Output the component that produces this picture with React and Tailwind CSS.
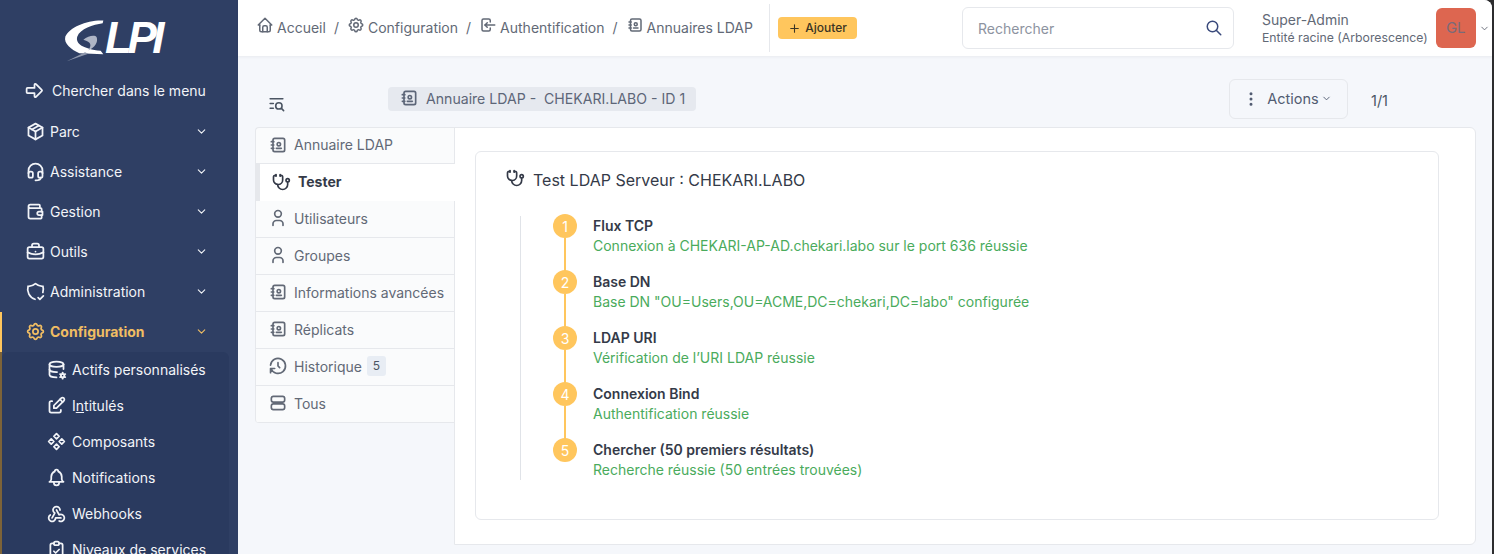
import {
  TbAddressBook,
  TbArrowBigRight,
  TbBell,
  TbBriefcase,
  TbChevronDown,
  TbClipboardCheck,
  TbComponents,
  TbDatabaseCog,
  TbDotsVertical,
  TbEdit,
  TbHeadset,
  TbHistory,
  TbHome,
  TbListSearch,
  TbLogin,
  TbPackage,
  TbPlus,
  TbSearch,
  TbSettings,
  TbShieldCheck,
  TbStethoscope,
  TbUser,
  TbWallet,
  TbWebhook,
} from "react-icons/tb";

const MENU = [
  { label: "Parc", icon: TbPackage },
  { label: "Assistance", icon: TbHeadset },
  { label: "Gestion", icon: TbWallet },
  { label: "Outils", icon: TbBriefcase },
  { label: "Administration", icon: TbShieldCheck },
];

const SUBMENU = [
  { label: "Actifs personnalisés", icon: TbDatabaseCog },
  { label: <><span>I</span><span className="underline">n</span><span>titulés</span></>, icon: TbEdit },
  { label: "Composants", icon: TbComponents },
  { label: "Notifications", icon: TbBell },
  { label: "Webhooks", icon: TbWebhook },
  { label: "Niveaux de services", icon: TbClipboardCheck },
];

const CRUMBS = [
  { label: "Accueil", icon: TbHome },
  { label: "Configuration", icon: TbSettings },
  { label: "Authentification", icon: TbLogin },
  { label: "Annuaires LDAP", icon: TbAddressBook },
];

function TwoRows({ size = 18, className }) {
  return (
    <svg width={size} height={size} viewBox="0 0 24 24" fill="none" stroke="currentColor" strokeWidth="2" strokeLinecap="round" strokeLinejoin="round" className={className}>
      <rect x="4" y="4" width="16" height="7" rx="2.5" />
      <rect x="4" y="13" width="16" height="7" rx="2.5" />
    </svg>
  );
}

const TABS = [
  { label: "Annuaire LDAP", icon: TbAddressBook },
  { label: "Tester", icon: TbStethoscope, active: true },
  { label: "Utilisateurs", icon: TbUser },
  { label: "Groupes", icon: TbUser },
  { label: "Informations avancées", icon: TbAddressBook },
  { label: "Réplicats", icon: TbAddressBook },
  { label: "Historique", icon: TbHistory, badge: 5 },
  { label: "Tous", icon: TwoRows },
];

const STEPS = [
  { title: "Flux TCP", text: "Connexion à CHEKARI-AP-AD.chekari.labo sur le port 636 réussie" },
  { title: "Base DN", text: 'Base DN "OU=Users,OU=ACME,DC=chekari,DC=labo" configurée' },
  { title: "LDAP URI", text: "Vérification de l’URI LDAP réussie" },
  { title: "Connexion Bind", text: "Authentification réussie" },
  { title: "Chercher (50 premiers résultats)", text: "Recherche réussie (50 entrées trouvées)" },
];

function Logo() {
  return (
    <div className="flex h-[71px] shrink-0 items-start pl-[60px] pt-[17px]">
      <svg width="45" height="47" viewBox="30 20 135 140" className="shrink-0">
        <path d="M160 30 C110 28 60 50 46 78 C40 100 65 118 88 128 L160 131 L152 121 C100 115 75 100 82 78 C90 55 130 42 158 38 Z" fill="#ffffff" />
        <path d="M100 88 C115 75 135 72 140 80 C145 95 135 110 115 120 C125 105 125 95 100 88 Z" fill="#aeb5c5" />
        <path d="M50 152 L105 125 L115 130 Z" fill="#8f98ad" />
      </svg>
      <span className="mt-[-1px] text-[44px] leading-[44px] font-bold italic tracking-[-4.5px] text-white font-['Liberation_Sans',sans-serif]">
        LPI
      </span>
    </div>
  );
}

function Sidebar() {
  return (
    <aside className="flex h-full w-[238px] shrink-0 flex-col overflow-hidden bg-[#2f3f64] text-[14px] text-[#f2f4f8]">
      <Logo />
      <div className="flex h-[41px] shrink-0 items-center pb-[2px] pl-[24px]">
        <TbArrowBigRight size={21} className="mr-[7px]" />
        <span>Chercher dans le menu</span>
      </div>
      <nav className="shrink-0">
        {MENU.map((m) => (
          <div key={m.label} className="flex h-[40px] items-center pb-[2px] pl-[25px] pr-[30px]">
            <m.icon size={21} className="mr-[4px] shrink-0" />
            <span className="flex-1">{m.label}</span>
            <TbChevronDown size={13} strokeWidth={2} />
          </div>
        ))}
        <div className="flex h-[40px] items-center border-l-2 border-[#ffc65d] pb-[2px] pl-[23px] pr-[30px] font-bold text-[#f0bd63]">
          <TbSettings size={21} className="mr-[4px] shrink-0" />
          <span className="flex-1">Configuration</span>
          <TbChevronDown size={13} strokeWidth={2} />
        </div>
      </nav>
      <div className="flex flex-1">
        <div className="w-[2px] bg-[#7d6338]" />
        <ul className="w-[227px] rounded-[6px] bg-[#2a3a5f]">
          {SUBMENU.map((s, i) => (
            <li key={i} className="flex h-[36px] items-center pb-[2px] pl-[44px] whitespace-nowrap">
              <s.icon size={21} className="mr-[5px] shrink-0" />
              <span>{s.label}</span>
            </li>
          ))}
        </ul>
      </div>
    </aside>
  );
}

function Header() {
  return (
    <header className="flex h-[56px] shrink-0 items-center rounded-tr-[8px] bg-white shadow-[0_1px_3px_rgba(30,41,59,0.06)]">
      <ol className="flex h-[48px] w-[532px] shrink-0 items-center border-r border-[#e6e8ec] pb-[2px] pl-[18px] text-[14px] text-[#626976]">
        {CRUMBS.map((c, i) => (
          <li key={c.label} className="flex items-center whitespace-nowrap">
            {i > 0 && <span className="mx-[8px]">/</span>}
            <c.icon size={18} className="mr-[3px] mt-[-4px]" />
            <span>{c.label}</span>
          </li>
        ))}
      </ol>
      <button className="ml-[8px] flex h-[22px] w-[79px] items-center justify-center rounded-[4px] bg-[#ffc65d] text-[12px] font-medium text-[#3b3524]">
        <TbPlus size={13} className="mr-[4px]" />
        Ajouter
      </button>
      <div className="ml-[105px] flex h-[42px] w-[272px] shrink-0 items-center rounded-[6px] border border-[#e6e8ec] pl-[15px] pr-[10px]">
        <span className="flex-1 text-[14px] text-[#8d93a0]">Rechercher</span>
        <TbSearch size={18} className="text-[#3a4a7c]" />
      </div>
      <div className="ml-[28px] flex flex-col whitespace-nowrap text-[#626976]">
        <span className="text-[14px] leading-[18px]">Super-Admin</span>
        <span className="text-[12.25px] leading-[17px]">Entité racine (Arborescence)</span>
      </div>
      <div className="ml-[8px] flex h-[40px] w-[40px] shrink-0 items-center justify-center rounded-[6px] bg-[#dd6650] text-[15px] text-[#7a6a78]">
        GL
      </div>
      <TbChevronDown size={11} className="ml-[3px] shrink-0 text-[#626976]" />
    </header>
  );
}

function TitleRow() {
  return (
    <div className="flex h-[71px] shrink-0 items-start">
      <TbListSearch size={19} className="ml-[29px] mt-[38px] text-[#4b5563]" />
      <div className="ml-[102px] mt-[31px] flex h-[24px] w-[308px] items-center rounded-[4px] bg-[#e6e9ef] pl-[11px] text-[14.1px] text-[#5d6678] whitespace-pre">
        <TbAddressBook size={20} className="mr-[7px] mt-[-3px]" />
        Annuaire LDAP -  CHEKARI.LABO - ID 1
      </div>
      <button className="ml-[533px] mt-[23px] flex h-[40px] w-[119px] items-center justify-center rounded-[6px] border border-[#e6e8ec] pb-[1px] text-[14.5px] text-[#525c72]">
        <TbDotsVertical size={18} className="mr-[7px] ml-[-3px]" />
        Actions
        <TbChevronDown size={11} className="ml-[2px]" />
      </button>
      <span className="ml-[23px] mt-[34px] text-[14.5px] text-[#4b5563]">1/1</span>
    </div>
  );
}

function Tabs() {
  return (
    <ul className="relative z-10 mr-[-1px] w-[200px] shrink-0 self-start overflow-hidden rounded-l-[4px] border border-r-0 border-b-0 border-[#e6e8ec] bg-[#fafbfc] text-[14px] text-[#626976]">
      {TABS.map((t, i) => (
        <li
          key={t.label}
          className={
            t.active
              ? "flex h-[37px] items-center border-l-[4px] border-[#e6e8ec] bg-white pb-[2px] pl-[11px] font-bold text-[#343a48]"
              : "flex items-center border-r border-b border-[#e6e8ec] pb-[2px] pl-[12px] " + (i === 0 ? "h-[36px]" : "h-[37px]")
          }
        >
          <t.icon size={20} className={t.active ? "mr-[7px] shrink-0" : "mr-[6px] shrink-0"} />
          <span className="whitespace-nowrap">{t.label}</span>
          {t.badge && (
            <span className="ml-[5px] flex h-[20px] w-[19px] items-center justify-center rounded-[3px] bg-[#e8edf4] text-[12px] text-[#4b5563]">{t.badge}</span>
          )}
        </li>
      ))}
    </ul>
  );
}

function Step({ step, n, last }) {
  return (
    <li className="flex h-[56px]">
      <div className="mt-[-2px] flex w-[24px] shrink-0 flex-col items-center">
        <span className="flex h-[24px] w-[24px] shrink-0 items-center justify-center rounded-full bg-[#ffc65d] text-[14px] text-white">{n}</span>
        {!last && <span className="w-[2px] flex-1 bg-[#ffc65d]" />}
      </div>
      <div className="ml-[16px] whitespace-nowrap text-[14px]">
        <div className="h-[20px] font-semibold leading-[20px] text-[#343a48]">{step.title}</div>
        <div className="leading-[20px] text-[#4aab5c]">{step.text}</div>
      </div>
    </li>
  );
}

function Panel() {
  return (
    <section className="h-[418px] flex-1 rounded-r-[6px] border border-[#e6e8ec] bg-white pl-[20px] pr-[36px] pt-[23px]">
      <div className="h-[369px] rounded-[6px] border border-[#e6e8ec] pl-[29px] pt-[16px]">
        <h2 className="flex h-[24px] items-center text-[16px] font-normal text-[#343a48]">
          <TbStethoscope size={20} className="mr-[8px] mt-[-4px]" />
          Test LDAP Serveur : CHEKARI.LABO
        </h2>
        <ol className="ml-[15px] mt-[24px] h-[264px] border-l border-[#e0e3e8] pl-[32px]">
          {STEPS.map((s, i) => (
            <Step key={s.title} step={s} n={i + 1} last={i === STEPS.length - 1} />
          ))}
        </ol>
      </div>
    </section>
  );
}

export default function App() {
  return (
    <div className="flex h-screen w-full overflow-hidden bg-[#2d2d2f] font-['Inter',sans-serif]">
      <Sidebar />
      <main className="mr-[2px] flex min-w-0 flex-1 flex-col rounded-tr-[8px] bg-[#f5f7fb]">
        <Header />
        <TitleRow />
        <div className="flex pl-[17px] pr-[16px]">
          <Tabs />
          <Panel />
        </div>
      </main>
    </div>
  );
}
